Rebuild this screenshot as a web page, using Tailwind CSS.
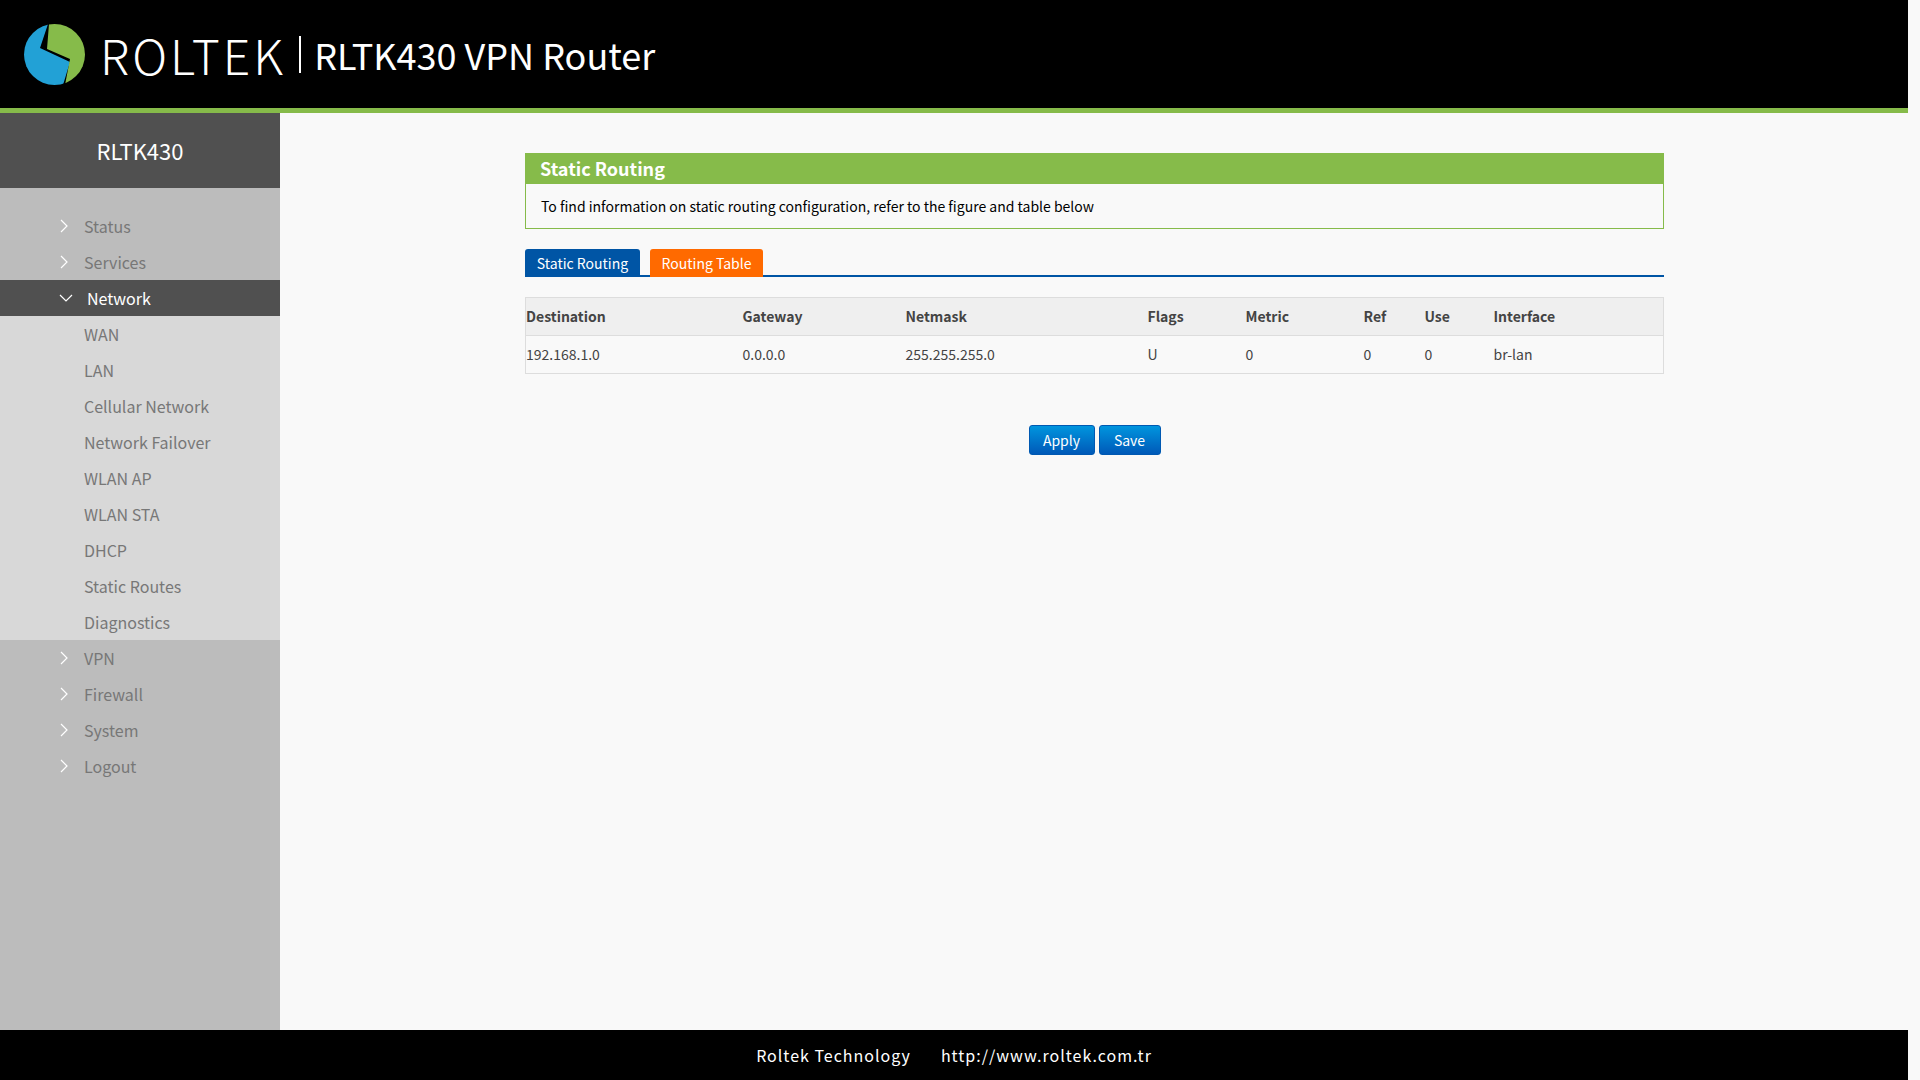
<!DOCTYPE html>
<html lang="en">
<head>
<meta charset="utf-8">
<title>RLTK430 VPN Router</title>
<script src="https://cdn.jsdelivr.net/npm/@tailwindcss/browser@4"></script>
</head>
<body class="bg-[#f9f9f9] font-['Noto_Sans_CJK_SC','Noto_Sans',sans-serif] text-[#333]">
<div class="flex h-[1080px] w-[1908px] flex-col overflow-hidden">
  <header class="flex h-[113px] shrink-0 items-center border-b-[5px] border-[#86bb4a] bg-black">
    <svg class="ml-[24px] h-[61px] w-[61px] shrink-0" viewBox="0 0 61 61" aria-hidden="true">
      <defs><clipPath id="c"><circle cx="30.5" cy="30.5" r="30.5"/></clipPath></defs>
      <g clip-path="url(#c)">
        <path d="M0 0H24L16 24L46 38L39 61H0Z" fill="#22a1d6"/>
        <path d="M25 0H61V61H41L46 35L23 25Z" fill="#86bb4a"/>
      </g>
    </svg>
    <span class="ml-[15px] text-[48px] leading-none font-light tracking-[3px] text-white">ROLTEK</span>
    <span class="ml-[13px] h-[37px] w-[2px] bg-white"></span>
    <span class="ml-[13px] text-[36px] leading-none text-white">RLTK430 VPN Router</span>
  </header>
  <div class="flex min-h-0 flex-1">
    <aside class="w-[280px] shrink-0 bg-[#bcbcbc]">
      <div class="flex h-[75px] items-center justify-center bg-[#505050] text-[22px] text-white">RLTK430</div>
      <nav class="pt-[20px] text-[16px] text-[#777]">
        <a class="flex h-[36px] items-center pl-[60px]"><svg class="mr-[16px] h-[14px] w-[8px]" viewBox="0 0 8 14" fill="none" stroke="#fff" stroke-width="1.2"><path d="M1 1l6 6-6 6"/></svg>Status</a>
        <a class="flex h-[36px] items-center pl-[60px]"><svg class="mr-[16px] h-[14px] w-[8px]" viewBox="0 0 8 14" fill="none" stroke="#fff" stroke-width="1.2"><path d="M1 1l6 6-6 6"/></svg>Services</a>
        <a class="flex h-[36px] items-center bg-[#505050] pl-[60px] text-white"><svg class="mr-[14px] ml-[-1px] h-[8px] w-[14px]" viewBox="0 0 14 8" fill="none" stroke="#fff" stroke-width="1.2"><path d="M1 1l6 6 6-6"/></svg>Network</a>
        <div class="bg-[#d8d8d8] pl-[84px]">
          <a class="flex h-[36px] items-center">WAN</a>
          <a class="flex h-[36px] items-center">LAN</a>
          <a class="flex h-[36px] items-center">Cellular Network</a>
          <a class="flex h-[36px] items-center">Network Failover</a>
          <a class="flex h-[36px] items-center">WLAN AP</a>
          <a class="flex h-[36px] items-center">WLAN STA</a>
          <a class="flex h-[36px] items-center">DHCP</a>
          <a class="flex h-[36px] items-center">Static Routes</a>
          <a class="flex h-[36px] items-center">Diagnostics</a>
        </div>
        <a class="flex h-[36px] items-center pl-[60px]"><svg class="mr-[16px] h-[14px] w-[8px]" viewBox="0 0 8 14" fill="none" stroke="#fff" stroke-width="1.2"><path d="M1 1l6 6-6 6"/></svg>VPN</a>
        <a class="flex h-[36px] items-center pl-[60px]"><svg class="mr-[16px] h-[14px] w-[8px]" viewBox="0 0 8 14" fill="none" stroke="#fff" stroke-width="1.2"><path d="M1 1l6 6-6 6"/></svg>Firewall</a>
        <a class="flex h-[36px] items-center pl-[60px]"><svg class="mr-[16px] h-[14px] w-[8px]" viewBox="0 0 8 14" fill="none" stroke="#fff" stroke-width="1.2"><path d="M1 1l6 6-6 6"/></svg>System</a>
        <a class="flex h-[36px] items-center pl-[60px]"><svg class="mr-[16px] h-[14px] w-[8px]" viewBox="0 0 8 14" fill="none" stroke="#fff" stroke-width="1.2"><path d="M1 1l6 6-6 6"/></svg>Logout</a>
      </nav>
    </aside>
    <main class="min-w-0 flex-1 pt-[40px] pl-[245px] pr-[244px]">
      <section class="h-[76px] border border-[#86bb4a] border-t-0 bg-[#f9f9f9]">
        <h2 class="mx-[-1px] flex h-[31px] items-center bg-[#86bb4a] pl-[15px] text-[18px] font-bold text-white">Static Routing</h2>
        <p class="flex h-[44px] items-center pl-[15px] text-[14px] text-black">To find information on static routing configuration, refer to the figure and table below</p>
      </section>
      <div class="mt-[20px] flex h-[28px] items-stretch gap-[10px] border-b-2 border-[#0055a5] text-[14px] text-white">
        <span class="flex h-[28px] w-[115px] items-center justify-center rounded-t-[3px] bg-[#0055a5]">Static Routing</span>
        <span class="flex h-[28px] w-[113px] items-center justify-center rounded-t-[3px] bg-[#ff6a00]">Routing Table</span>
      </div>
      <table class="mt-[20px] w-full table-fixed border-collapse border border-[#ddd] text-[14px] text-[#444]">
        <thead>
          <tr class="h-[38px] border-b border-[#ddd] bg-[#efefef] text-left">
            <th class="w-[217px] font-bold">Destination</th>
            <th class="w-[163px] font-bold">Gateway</th>
            <th class="w-[242px] font-bold">Netmask</th>
            <th class="w-[98px] font-bold">Flags</th>
            <th class="w-[118px] font-bold">Metric</th>
            <th class="w-[61px] font-bold">Ref</th>
            <th class="w-[69px] font-bold">Use</th>
            <th class="font-bold">Interface</th>
          </tr>
        </thead>
        <tbody>
          <tr class="h-[38px]">
            <td>192.168.1.0</td><td>0.0.0.0</td><td>255.255.255.0</td><td>U</td><td>0</td><td>0</td><td>0</td><td>br-lan</td>
          </tr>
        </tbody>
      </table>
      <div class="mt-[51px] flex justify-center gap-[4px] text-[14px] text-white">
        <button class="h-[30px] w-[66px] rounded-[3px] border border-[#0059b2] bg-gradient-to-b from-[#0095de] to-[#0059b8]">Apply</button>
        <button class="h-[30px] w-[62px] rounded-[3px] border border-[#0059b2] bg-gradient-to-b from-[#0095de] to-[#0059b8]">Save</button>
      </div>
    </main>
  </div>
  <footer class="flex h-[50px] shrink-0 items-center justify-center gap-[30px] bg-black text-[16px] tracking-[1px] text-white">
    <span>Roltek Technology</span><span>http://www.roltek.com.tr</span>
  </footer>
</div>
</body>
</html>
